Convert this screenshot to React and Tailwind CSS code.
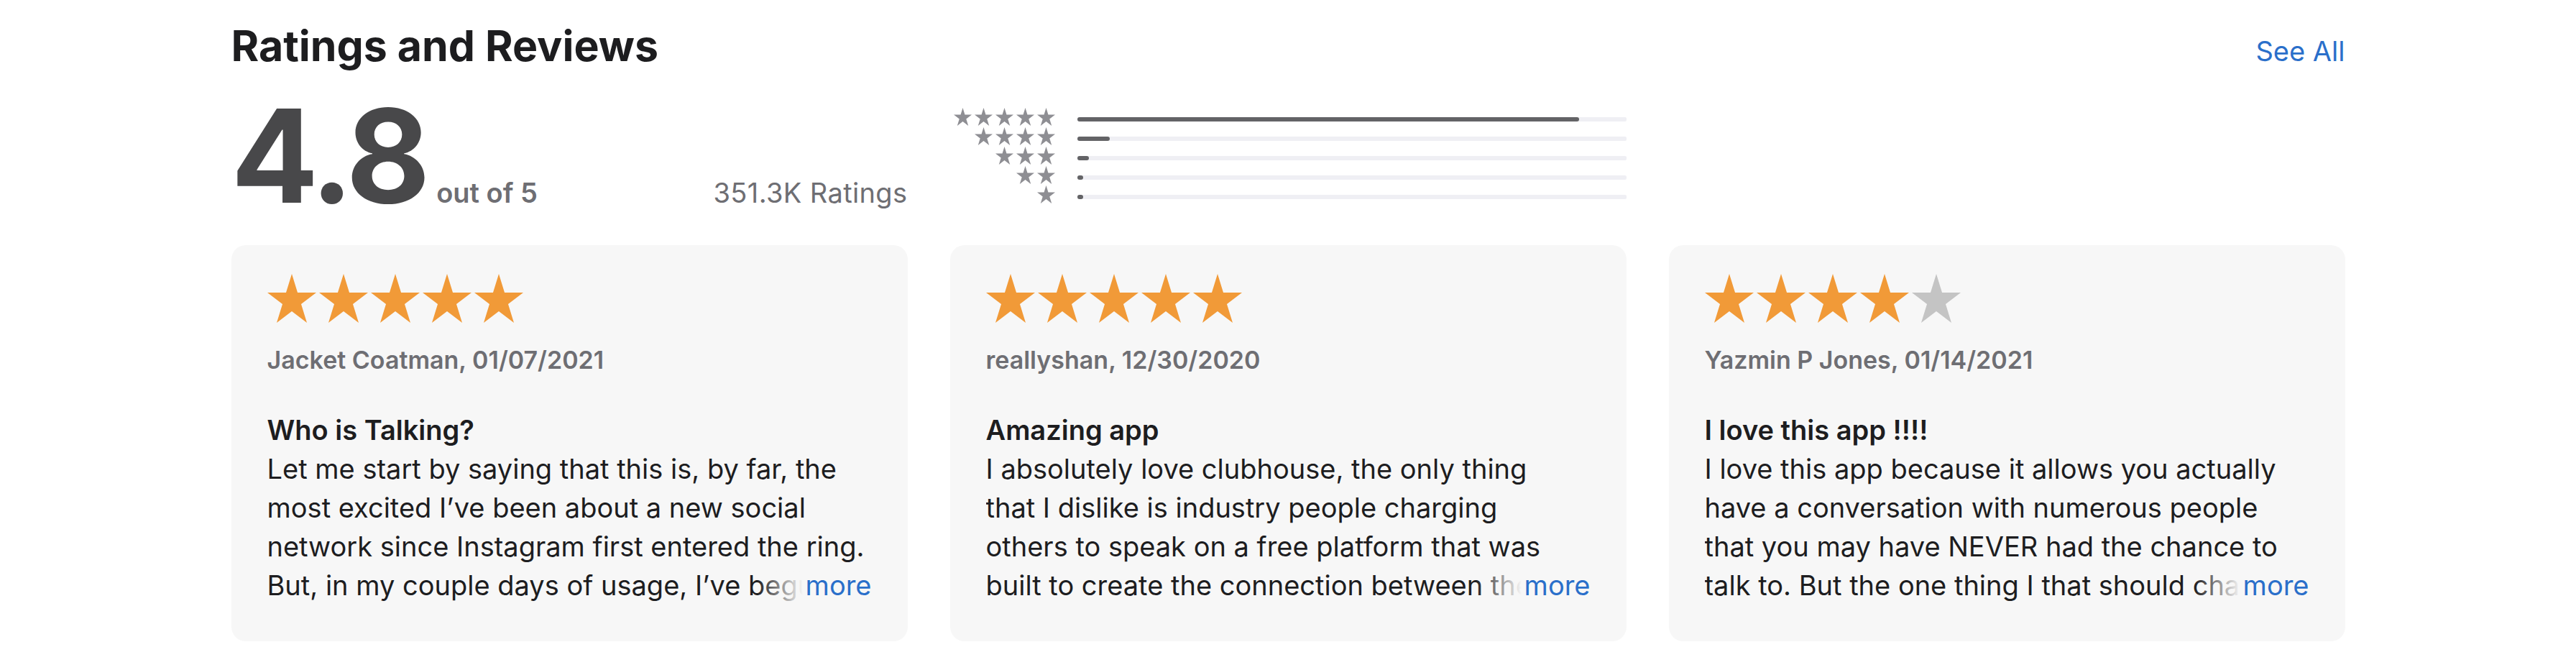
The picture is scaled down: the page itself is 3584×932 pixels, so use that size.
import React from "react";

// body lines are kept as shown in the store listing; the last one runs on under the "more" link
const reviews = [
  {
    rating: 5,
    author: "Jacket Coatman",
    date: "01/07/2021",
    title: "Who is Talking?",
    body: [
      "Let me start by saying that this is, by far, the",
      "most excited I’ve been about a new social",
      "network since Instagram first entered the ring.",
      "But, in my couple days of usage, I’ve begun to notice a pattern"
    ]
  },
  {
    rating: 5,
    author: "reallyshan",
    date: "12/30/2020",
    title: "Amazing app",
    body: [
      "I absolutely love clubhouse, the only thing",
      "that I dislike is industry people charging",
      "others to speak on a free platform that was",
      "built to create the connection between the people and creators"
    ]
  },
  {
    rating: 4,
    author: "Yazmin P Jones",
    date: "01/14/2021",
    title: "I love this app !!!!",
    body: [
      "I love this app because it allows you actually",
      "have a conversation with numerous people",
      "that you may have NEVER had the chance to",
      "talk to. But the one thing I that should change is the rooms"
    ]
  }
];

// share of ratings per star count, 5 down to 1
const histogram = [91.4, 6, 2.1, 1, 1];

const Star = ({ className }) => (
  <svg viewBox="0 0 100 100" preserveAspectRatio="none" className={className}>
    <polygon
      points="50,0 61.8,38.2 100,38.2 69.1,61.8 80.9,100 50,76.4 19.1,100 30.9,61.8 0,38.2 38.2,38.2"
      fill="currentColor"
    />
  </svg>
);

const ReviewCard = ({ review }) => (
  <div className="rounded-[20px] bg-[#f7f7f7] px-[50px] pt-[40px] pb-[51px]">
    <div className="flex gap-[4px]">
      {[0, 1, 2, 3, 4].map((i) => (
        <Star
          key={i}
          className={`h-[68px] w-[68px] ${i < review.rating ? "text-[#f19a38]" : "text-[#c4c4c4]"}`}
        />
      ))}
    </div>
    <div className="mt-[32px] text-[34px] leading-[40px] font-semibold text-[#6e6e73]">
      {review.author}, {review.date}
    </div>
    <div className="mt-[50px] text-[38px] leading-[54px] font-semibold text-[#1d1d1f]">
      {review.title}
    </div>
    <div className="relative h-[216px] overflow-hidden text-[38px] leading-[54px] text-[#1d1d1f]">
      <p>
        {review.body.map((line, i) => (
          <span key={i} className="block whitespace-nowrap">
            {line}
          </span>
        ))}
      </p>
      <span className="absolute right-0 bottom-0 flex">
        <span className="w-[64px] bg-gradient-to-r from-[#f7f7f7]/0 to-[#f7f7f7]" />
        <a href="#" className="bg-[#f7f7f7] pl-[4px] text-[#2a6fca]">
          more
        </a>
      </span>
    </div>
  </div>
);

export default function App() {
  return (
    <div className="min-h-screen bg-white font-['Inter','Liberation_Sans',sans-serif]">
      <section className="mx-auto w-[2941px] pt-[34px]">
        <div className="flex items-baseline justify-between">
          <h2 className="text-[59px] leading-none font-bold text-[#1d1d1f]">Ratings and Reviews</h2>
          <a href="#" className="text-[38px] leading-none text-[#2a6fca]">
            See All
          </a>
        </div>

        <div className="mt-[34px] grid grid-cols-3 gap-[59px]">
          <div className="flex items-baseline justify-between">
            <div className="flex items-baseline">
              <span className="text-[180px] leading-none font-bold tracking-[-0.03em] text-[#48484a]">
                4.8
              </span>
              <span className="ml-[14px] text-[38px] font-semibold text-[#6e6e73]">out of 5</span>
            </div>
            <span className="text-[38px] tracking-[0.01em] text-[#6e6e73]">351.3K Ratings</span>
          </div>

          <div className="pt-[22px]">
            {histogram.map((pct, row) => (
              <div key={row} className="flex h-[27px] items-center">
                <div className="flex w-[146px] justify-end gap-[4px]">
                  {Array.from({ length: 5 - row }).map((_, i) => (
                    <Star key={i} className="h-[25px] w-[25px] text-[#8e8e93]" />
                  ))}
                </div>
                <div className="mt-[6px] ml-[31px] h-[6px] flex-1 rounded-[2px] bg-[#efeff4]">
                  <div
                    className="h-full min-w-[8px] rounded-full bg-[#636366]"
                    style={{ width: `${pct}%` }}
                  />
                </div>
              </div>
            ))}
          </div>
          <div />
        </div>

        <div className="mt-[34px] grid grid-cols-3 gap-[59px]">
          {reviews.map((review) => (
            <ReviewCard key={review.author} review={review} />
          ))}
        </div>
      </section>
    </div>
  );
}
